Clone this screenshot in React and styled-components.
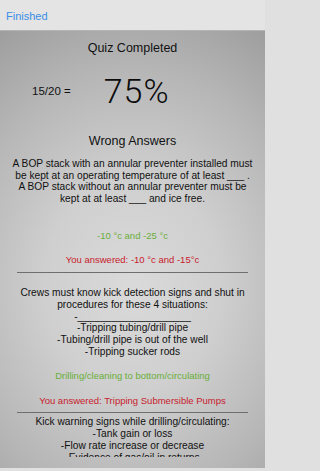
import React from 'react'
import styled, { createGlobalStyle } from 'styled-components'

const GlobalStyle = createGlobalStyle`
    html, body {
        margin: 0;
        padding: 0;
        background: #e0e0e0;
    }
    body {
        font-family: "Liberation Sans", Arial, sans-serif;
        color: #111;
    }
`

const questions = [
    {
        text: "A BOP stack with an annular preventer installed must\nbe kept at an operating temperature of at least ___ .\nA BOP stack without an annular preventer must be\nkept at at least ___ and ice free.\n\u00a0",
        correct: "-10 °c and -25 °c",
        answered: "-10 °c and -15°c",
    },
    {
        text: "\u00a0\nCrews must know kick detection signs and shut in\nprocedures for these 4 situations:\n-____________________\n-Tripping tubing/drill pipe\n-Tubing/drill pipe is out of the well\n-Tripping sucker rods",
        correct: "Drilling/cleaning to bottom/circulating",
        answered: "Tripping Submersible Pumps",
    },
    {
        text: "Kick warning signs while drilling/circulating:\n-Tank gain or loss\n-Flow rate increase or decrease\n-Evidence of gas/oil in returns\n-Change in pump pressure\n-Drilling break",
        correct: "",
        answered: "",
    },
]

const App = () => {
    return (
        <Screen>
            <GlobalStyle />
            <NavBar>
                <NavButton>Finished</NavButton>
            </NavBar>
            <Body>
                <Scroll>
                    <Title>Quiz Completed</Title>
                    <ScoreRow>
                        <Fraction>15/20 =</Fraction>
                        <Percent>75%</Percent>
                    </ScoreRow>
                    <Heading>Wrong Answers</Heading>
                    {questions.map((q, i) => (
                        <Block key={i} $first={i === 0}>
                            <Question>{q.text}</Question>
                            {q.correct && <Correct>{q.correct}</Correct>}
                            {q.answered && <Answered>You answered: {q.answered}</Answered>}
                            {q.answered && <Divider />}
                        </Block>
                    ))}
                </Scroll>
            </Body>
            <BottomBar />
        </Screen>
    )
}

export default App

const Screen = styled.div`
    width: 265px;
    height: 471px;
    display: flex;
    flex-direction: column;
    overflow: hidden;
`

const NavBar = styled.div`
    height: 31px;
    flex-shrink: 0;
    display: flex;
    align-items: center;
    padding-left: 6px;
    padding-top: 2px;
    box-sizing: border-box;
    background: #e4e4e4;
    border-bottom: 1px solid #b4b4b4;
`

const NavButton = styled.span`
    color: #3a8de6;
    font-family: "Liberation Sans", Arial, sans-serif;
    font-size: 11px;
`

const Body = styled.div`
    flex: 1;
    display: flex;
    flex-direction: column;
    background: radial-gradient(ellipse 95% 70% at 50% 58%, #dadada 0%, #cfcfcf 35%, #b6b6b6 70%, #9c9c9c 100%);
`

const Scroll = styled.div`
    height: 426px;
    overflow: hidden;
    text-align: center;
`

const Title = styled.div`
    margin-top: 9.5px;
    font-size: 12.5px;
    line-height: 15px;
`

const ScoreRow = styled.div`
    margin-top: 15px;
    height: 40px;
    display: flex;
    align-items: center;
    padding-left: 32px;
    gap: 33px;
`

const Fraction = styled.span`
    font-size: 11.5px;
`

const Percent = styled.span`
    font-family: Roboto, "Liberation Sans", sans-serif;
    font-weight: 300;
    font-size: 34px;
    line-height: 40px;
    letter-spacing: 1px;
    color: #0a0a0a;
`

const Heading = styled.div`
    margin-top: 23px;
    font-size: 12.5px;
    line-height: 15px;
`

const Block = styled.div`
    display: flex;
    flex-direction: column;
    align-items: center;
    margin-top: ${p => (p.$first ? '6.5px' : '0')};
`

const Question = styled.div`
    margin-top: 3px;
    white-space: pre-line;
    font-size: 10.2px;
    line-height: 11.7px;
    padding: 0 4px;
`

const Correct = styled.div`
    margin-top: 13px;
    font-size: 9.5px;
    line-height: 12px;
    color: #6aae3a;
`

const Answered = styled.div`
    margin-top: 12.5px;
    font-size: 9.5px;
    line-height: 12px;
    color: #c8202c;
`

const Divider = styled.div`
    margin-top: 5.5px;
    width: 231px;
    height: 1px;
    background: #6e6e6e;
`

const BottomBar = styled.div`
    height: 3px;
    flex-shrink: 0;
    background: #e0e0e0;
`
